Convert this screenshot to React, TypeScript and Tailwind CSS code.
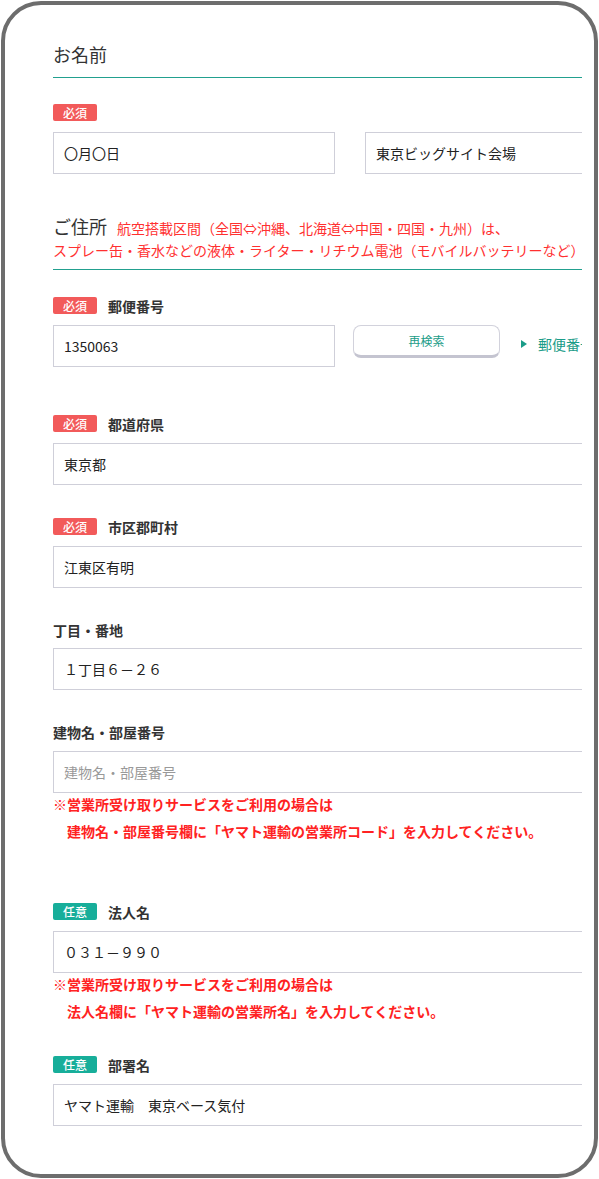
const font = { fontFamily: '"Noto Sans CJK JP", "Noto Sans", sans-serif' };

const Badge = ({ kind }: { kind: "req" | "opt" }) => (
  <span
    className={
      "flex h-[17px] w-[44px] shrink-0 items-center justify-center rounded-[2px] text-[12px] font-medium leading-none text-white " +
      (kind === "req" ? "bg-[#f25a5a]" : "bg-[#17ae9a]")
    }
  >
    {kind === "req" ? "必須" : "任意"}
  </span>
);

const FieldLabel = ({ badge, label }: { badge?: "req" | "opt"; label: string }) => (
  <div className="flex h-[17px] items-center gap-[11px]">
    {badge && <Badge kind={badge} />}
    <span className="text-[14px] font-bold leading-none text-[#333]">{label}</span>
  </div>
);

const Input = ({ value, placeholder, className = "w-[560px]" }: { value?: string; placeholder?: string; className?: string }) => (
  <div
    className={
      "flex h-[42px] shrink-0 items-center border border-[#cfcfd9] bg-white pl-[10px] text-[14px] " +
      className
    }
  >
    {value ? <span className="text-[#222]">{value}</span> : <span className="text-[#999]">{placeholder}</span>}
  </div>
);

const Note = ({ second }: { second: string }) => (
  <div className="text-[14px] font-bold text-[#ff2222]">
    <div className="leading-[22px] whitespace-nowrap">※営業所受け取りサービスをご利用の場合は</div>
    <div className="mt-[5px] pl-[14px] leading-[22px] whitespace-nowrap">{second}</div>
  </div>
);

export default function App() {
  return (
    <div className="h-[1179px] w-[599px] bg-white p-[1px]" style={font}>
      <div className="h-full overflow-hidden rounded-[40px] border-[4px] border-[#6d6d6d] pl-[48px] pr-[12px]">
        <div className="overflow-hidden">
          {/* お名前 */}
          <div className="mt-[38px] border-b border-[#22a08f] pb-[12px] text-[18px] leading-[22px] text-[#333]">
            お名前
          </div>
          <div className="mt-[26px]">
            <FieldLabel badge="req" label="" />
          </div>
          <div className="mt-[11px] flex gap-[30px]">
            <Input value="〇月〇日" className="w-[282px]" />
            <Input value="東京ビッグサイト会場" className="w-[282px]" />
          </div>

          {/* ご住所 */}
          <div className="mt-[41px] border-b border-[#22a08f] pb-[8px] text-[14px] leading-[22px]">
            <span className="text-[18px] text-[#333]">ご住所</span>
            <span className="ml-[10px] text-[#ff3030]">航空搭載区間（全国⇔沖縄、北海道⇔中国・四国・九州）は、</span>
            <br />
            <span className="whitespace-nowrap text-[#ff3030]">
              スプレー缶・香水などの液体・ライター・リチウム電池（モバイルバッテリーなど）
            </span>
          </div>

          <div className="mt-[27px]">
            <FieldLabel badge="req" label="郵便番号" />
          </div>
          <div className="mt-[11px] flex items-start">
            <Input value="1350063" className="w-[282px]" />
            <button className="ml-[18px] flex h-[33px] w-[147px] shrink-0 items-center justify-center rounded-[8px] border border-b-[3px] border-[#d2d2dc] border-b-[#c4c4d0] bg-white text-[12px] text-[#1a9c88]">
              再検索
            </button>
            <div className="ml-[21px] flex h-[38px] shrink-0 items-center whitespace-nowrap text-[14px] text-[#1a9c88]">
              <svg width="6" height="8" viewBox="0 0 6 8" className="mr-[11px]">
                <path d="M0 0 L6 4 L0 8 Z" fill="#1a9c88" />
              </svg>
              郵便番号を調べる
            </div>
          </div>

          <div className="mt-[48px]">
            <FieldLabel badge="req" label="都道府県" />
          </div>
          <div className="mt-[11px]">
            <Input value="東京都" />
          </div>

          <div className="mt-[33px]">
            <FieldLabel badge="req" label="市区郡町村" />
          </div>
          <div className="mt-[11px]">
            <Input value="江東区有明" />
          </div>

          <div className="mt-[33px]">
            <FieldLabel label="丁目・番地" />
          </div>
          <div className="mt-[10px]">
            <Input value="１丁目６－２６" />
          </div>

          <div className="mt-[33px]">
            <FieldLabel label="建物名・部屋番号" />
          </div>
          <div className="mt-[11px]">
            <Input placeholder="建物名・部屋番号" />
          </div>
          <Note second="建物名・部屋番号欄に「ヤマト運輸の営業所コード」を入力してください。" />

          <div className="mt-[61px]">
            <FieldLabel badge="opt" label="法人名" />
          </div>
          <div className="mt-[11px]">
            <Input value="０３１－９９０" />
          </div>
          <Note second="法人名欄に「ヤマト運輸の営業所名」を入力してください。" />

          <div className="mt-[34px]">
            <FieldLabel badge="opt" label="部署名" />
          </div>
          <div className="mt-[11px]">
            <Input value="ヤマト運輸　東京ベース気付" />
          </div>
        </div>
      </div>
    </div>
  );
}
